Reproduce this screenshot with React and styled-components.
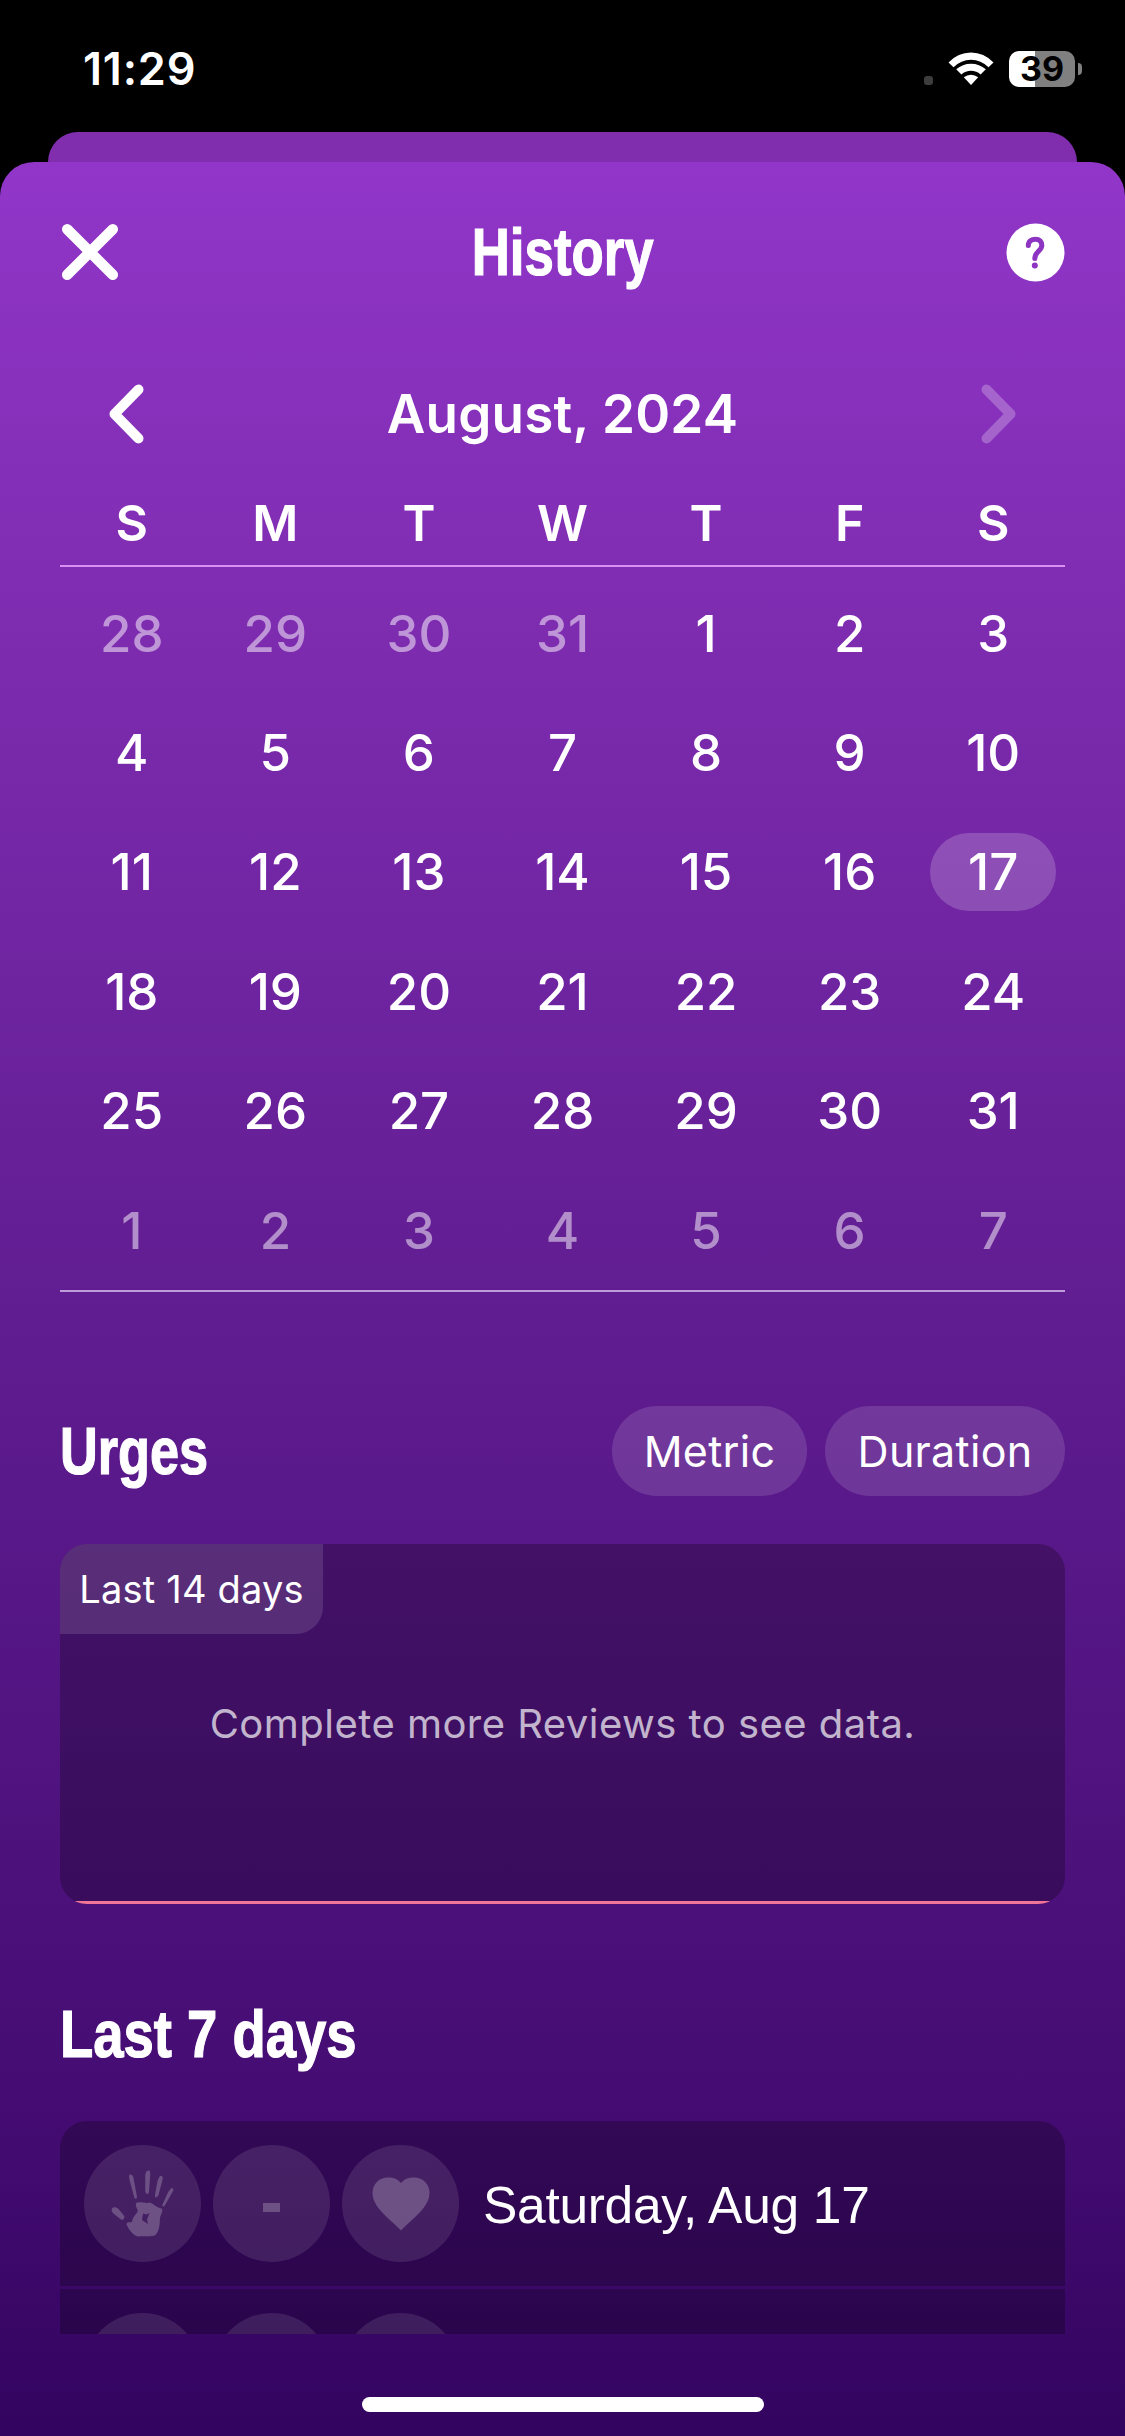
import React from 'react';
import styled, { createGlobalStyle } from 'styled-components';

const GlobalStyle = createGlobalStyle`
  * {
    box-sizing: border-box;
  }

  body {
    margin: 0;
    background: #000;
    font-family: Inter, 'Liberation Sans', sans-serif;
    color: #fff;
  }
`;

const Screen = styled.div`
  width: 1125px;
  height: 2436px;
  overflow: hidden;
  background: #000;
  display: flex;
  flex-direction: column;
`;

const StatusBar = styled.div`
  flex: none;
  height: 132px;
  padding: 5px 43px 0 83px;
  display: flex;
  align-items: center;
  justify-content: space-between;
`;

const Clock = styled.span`
  font-size: 45px;
  font-weight: 600;
  letter-spacing: 0.8px;
`;

const StatusIcons = styled.div`
  display: flex;
  align-items: center;
`;

const SignalDot = styled.span`
  width: 9px;
  height: 9px;
  margin: 23px 15px 0 0;
  border-radius: 3px;
  background: #3d3d3d;
`;

const Battery = styled.div`
  width: 66px;
  height: 36px;
  margin-left: 15px;
  border-radius: 10px;
  background: linear-gradient(90deg, #fff 39%, #808080 39%);
  color: #000;
  font-size: 34px;
  font-weight: 700;
  line-height: 36px;
  text-align: center;
`;

const BatteryTip = styled.span`
  width: 4px;
  height: 12px;
  margin-left: 3px;
  border-radius: 0 6px 6px 0;
  background: #808080;
`;

const BackCard = styled.div`
  flex: none;
  height: 70px;
  margin: 0 48px -40px;
  border-radius: 30px 30px 0 0;
  background: #802eae;
`;

const Sheet = styled.div`
  position: relative;
  flex: 1;
  min-height: 0;
  padding: 0 60px;
  border-radius: 34px 34px 0 0;
  background: linear-gradient(#9136c9 0%, #7e2cb0 20%, #5f1c90 52%, #440c72 86%, #330460 100%);
  display: flex;
  flex-direction: column;
`;

const Header = styled.div`
  flex: none;
  height: 180px;
  display: flex;
  align-items: center;
  justify-content: space-between;
`;

const Condensed = styled.h1`
  margin: 0;
  font-family: 'Liberation Sans', Arial, sans-serif;
  font-size: 66px;
  font-weight: 700;
  line-height: 80px;
  white-space: nowrap;
  -webkit-text-stroke: 1.2px #fff;
  transform: scaleX(${props => props.$squeeze});
  transform-origin: ${props => props.$origin || 'left'} center;
`;

const MonthBar = styled.div`
  flex: none;
  height: 144px;
  padding: 0 48px;
  display: flex;
  align-items: center;
  justify-content: space-between;
`;

const Month = styled.span`
  font-size: 53px;
  font-weight: 600;
  letter-spacing: 0.2px;
`;

const Week = styled.div`
  flex: none;
  display: grid;
  grid-template-columns: repeat(7, 1fr);
  height: ${props => props.$height}px;
  align-items: center;
  justify-items: center;
`;

const Weekdays = styled(Week)`
  padding-bottom: 5px;
  border-bottom: 2px solid #d890f5;
  font-size: 50px;
  font-weight: 600;
`;

const Days = styled.div`
  flex: none;
  padding-top: 7px;
  border-bottom: 2px solid #bf9bd8;
`;

const Day = styled.span`
  width: 126px;
  height: 78px;
  padding-bottom: 1px;
  border-radius: 39px;
  display: flex;
  align-items: center;
  justify-content: center;
  font-size: 51px;
  font-weight: 500;
  color: ${props => (props.$muted ? 'rgba(255, 255, 255, 0.5)' : '#fff')};
  background: ${props => (props.$selected ? 'rgba(255, 255, 255, 0.19)' : 'none')};
`;

const SectionHead = styled.div`
  flex: none;
  height: 90px;
  margin-top: 114px;
  display: flex;
  align-items: center;
  gap: 18px;
`;

const Spacer = styled.div`
  flex: 1;
`;

const Pill = styled.button`
  flex: none;
  width: ${props => props.$width}px;
  height: 90px;
  padding: 0;
  border: 0;
  border-radius: 45px;
  background: rgba(255, 255, 255, 0.13);
  color: #fff;
  font-family: inherit;
  font-size: 43px;
  font-weight: 400;
  letter-spacing: 0.3px;
`;

const Chart = styled.div`
  flex: none;
  height: 360px;
  margin-top: 48px;
  border-radius: 27px;
  background: rgba(0, 0, 0, 0.24);
  overflow: hidden;
  display: flex;
  flex-direction: column;
`;

const Range = styled.div`
  width: 263px;
  height: 90px;
  border-radius: 0 0 27px 0;
  background: rgba(255, 255, 255, 0.12);
  font-size: 38px;
  line-height: 90px;
  letter-spacing: 0.2px;
  text-align: center;
`;

const Empty = styled.p`
  margin: 63px 0 0;
  color: rgba(255, 255, 255, 0.7);
  font-size: 40px;
  line-height: 54px;
  letter-spacing: 0.47px;
  text-align: center;
`;

const Baseline = styled.div`
  height: 3px;
  margin-top: auto;
  background: #f07598;
`;

const WeekHead = styled.div`
  flex: none;
  margin-top: 90px;
  height: 81px;
`;

const Entries = styled.div`
  flex: none;
  height: 213px;
  margin-top: 46px;
  border-radius: 27px 27px 0 0;
  overflow: hidden;
  display: flex;
  flex-direction: column;
  gap: 3px;
`;

const Entry = styled.div`
  flex: none;
  height: 165px;
  padding: 0 24px;
  background: rgba(0, 0, 0, 0.25);
  display: flex;
  align-items: center;
  gap: 12px;
`;

const Badge = styled.span`
  flex: none;
  width: 117px;
  height: 117px;
  border-radius: 50%;
  background: rgba(255, 255, 255, 0.1);
  color: rgba(255, 255, 255, 0.22);
  display: flex;
  align-items: center;
  justify-content: center;
`;

const Dash = styled.span`
  width: 17px;
  height: 9px;
  margin-top: 8px;
  background: currentColor;
`;

const EntryDate = styled.span`
  margin: 3px 0 0 12px;
  font-family: 'Liberation Sans', Arial, sans-serif;
  font-size: 51.5px;
  letter-spacing: -0.3px;
  white-space: nowrap;
`;

const HomeBar = styled.div`
  flex: none;
  align-self: center;
  width: 402px;
  height: 15px;
  margin-top: 63px;
  border-radius: 8px;
  background: #fff;
`;

const WifiIcon = () => (
  <svg width="46" height="34" viewBox="0 0 46 34" fill="#fff">
    <path d="M0.5 10.5Q10 0.5 23 0.5T45.5 10.5L40.5 15.3Q33 7.7 23 7.7T5.5 15.3Z" />
    <path d="M8.2 17.3Q14.5 11.7 23 11.7T37.8 17.3L32.6 22.5Q28.5 18.8 23 18.8T13.4 22.5Z" />
    <path d="M15.8 25.2Q19 22.7 23 22.7T30.2 25.2L23 33Z" />
  </svg>
);

const CloseIcon = () => (
  <svg width="59" height="58" viewBox="0 0 59 58" stroke="#fff" strokeWidth="10.5" strokeLinecap="round">
    <path d="M7.2 6.2L52.8 51.8M52.8 6.2L7.2 51.8" />
  </svg>
);

const HelpIcon = () => (
  <svg width="59" height="59" viewBox="0 0 59 59" fill="none">
    <circle cx="29.5" cy="29.5" r="29" fill="#fff" />
    <path
      d="M22.3 22.5C22.3 18 25.5 16.2 29.5 16.2S35.8 18.500 35.800 22.500C35.800 28 28.800 28.500 28.800 35.500"
      stroke="#8d34c2"
      strokeWidth="5"
      strokeLinecap="round"
    />
    <circle cx="28.800" cy="42.500" r="3" fill="#8d34c2" />
  </svg>
);

const Chevron = ({ next }) => (
  <svg width="37" height="60" viewBox="0 0 37 60" fill="none" stroke="#fff" strokeWidth="10" strokeLinecap="round" strokeLinejoin="round" opacity={next ? 0.25 : 1}>
    <path d={next ? 'M6.500 5.500L30.500 30L6.500 54.500' : 'M30.500 5.500L6.500 30L30.500 54.500'} />
  </svg>
);

const HandIcon = () => (
  <svg width="64" height="68" viewBox="0 0 64 68" fill="currentColor">
    <path d="M18 5.5C19.500 3.500 22 5 22.500 8L26 27C25.500 29.500 24 29 23.300 27.500L18.300 9Z" />
    <path d="M36 1C38.300 -0.500 39.600 1 39.200 5L38 22C37 25 35 24.500 34.300 21.500L34.200 8C34.200 4 34.700 2 36 1Z" />
    <path d="M48.500 6.500C51 5.300 52.300 6.500 51.600 9.500L47.500 25C46 28 43.500 28.500 44 25L46.500 11Z" />
    <path d="M60 18.500C62.500 17.600 63 19.500 61.800 21.500L53.500 36C51.500 37.500 51 36 51.700 34L57.200 22Z" />
    <path d="M0.800 39C1.500 36.500 5 36.500 7.500 39L13.300 46C13.800 48.500 12 50.500 10 49.500L3 44C1 42.500 0.300 41 0.800 39Z" />
    <path
      fillRule="evenodd"
      d="M25 33C29 31 35 34 39 32.500C43 34 46 38 51 38.500C52 42 50 44 49 48C48.500 54 49 60 44.500 65C39 67.500 33 65.500 28 66.500C23 66.500 18 60 15.500 54.500C16 51 19 53 21 52C21.500 47 24 46 26.500 42C28 39.500 24 38 25 33ZM32 43.500L31 50L37 54L36 49.500L38.500 43L35.500 44.500Z"
    />
  </svg>
);

const HeartIcon = () => (
  <svg width="58" height="54" viewBox="0 0 58 54" fill="currentColor">
    <path d="M29 6C33 1.500 37 0.500 42 0.500C51 0.500 57.500 7 57.500 16C57.500 30 42 40 29 53.500C16 40 0.500 30 0.500 16C0.500 7 7 0.500 16 0.500C21 0.500 25 1.500 29 6Z" />
  </svg>
);

const weekdays = ['S', 'M', 'T', 'W', 'T', 'F', 'S'];

// 4 days of July lead into August, the last week belongs to September
const days = Array.from({ length: 42 }, (_, i) => {
  if (i < 4) return { label: 28 + i, muted: true };
  if (i > 34) return { label: i - 34, muted: true };
  return { label: i - 3, muted: false };
});

const weeks = [0, 1, 2, 3, 4, 5].map(n => days.slice(n * 7, n * 7 + 7));

class App extends React.Component {
  constructor(props) {
    super(props);
    this.state = {
      selected: 17,
      // second entry only peeks in above the fold
      entries: [{ id: 1, date: 'Saturday, Aug 17' }, { id: 2 }]
    };
  }

  render() {
    const { selected, entries } = this.state;

    return (
      <Screen>
        <GlobalStyle />
        <StatusBar>
          <Clock>11:29</Clock>
          <StatusIcons>
            <SignalDot />
            <WifiIcon />
            <Battery>39</Battery>
            <BatteryTip />
          </StatusIcons>
        </StatusBar>
        <BackCard />
        <Sheet>
          <Header>
            <CloseIcon />
            <Condensed $squeeze={0.8} $origin="center">History</Condensed>
            <HelpIcon />
          </Header>
          <MonthBar>
            <Chevron />
            <Month>August, 2024</Month>
            <Chevron next />
          </MonthBar>
          <Weekdays $height={81}>
            {weekdays.map((name, i) => <span key={i}>{name}</span>)}
          </Weekdays>
          <Days>
            {weeks.map((week, i) => (
              <Week key={i} $height={119.4}>
                {week.map(day => (
                  <Day key={day.label} $muted={day.muted} $selected={!day.muted && day.label === selected}>
                    {day.label}
                  </Day>
                ))}
              </Week>
            ))}
          </Days>
          <SectionHead>
            <Condensed as="h2" $squeeze={0.792}>Urges</Condensed>
            <Spacer />
            <Pill $width={195}>Metric</Pill>
            <Pill $width={240}>Duration</Pill>
          </SectionHead>
          <Chart>
            <Range>Last 14 days</Range>
            <Empty>Complete more Reviews to see data.</Empty>
            <Baseline />
          </Chart>
          <WeekHead>
            <Condensed as="h2" $squeeze={0.825}>Last 7 days</Condensed>
          </WeekHead>
          <Entries>
            {entries.map(entry => (
              <Entry key={entry.id}>
                <Badge><HandIcon /></Badge>
                <Badge><Dash /></Badge>
                <Badge><HeartIcon /></Badge>
                {entry.date && <EntryDate>{entry.date}</EntryDate>}
              </Entry>
            ))}
          </Entries>
          <HomeBar />
        </Sheet>
      </Screen>
    );
  }
}

export default App;
